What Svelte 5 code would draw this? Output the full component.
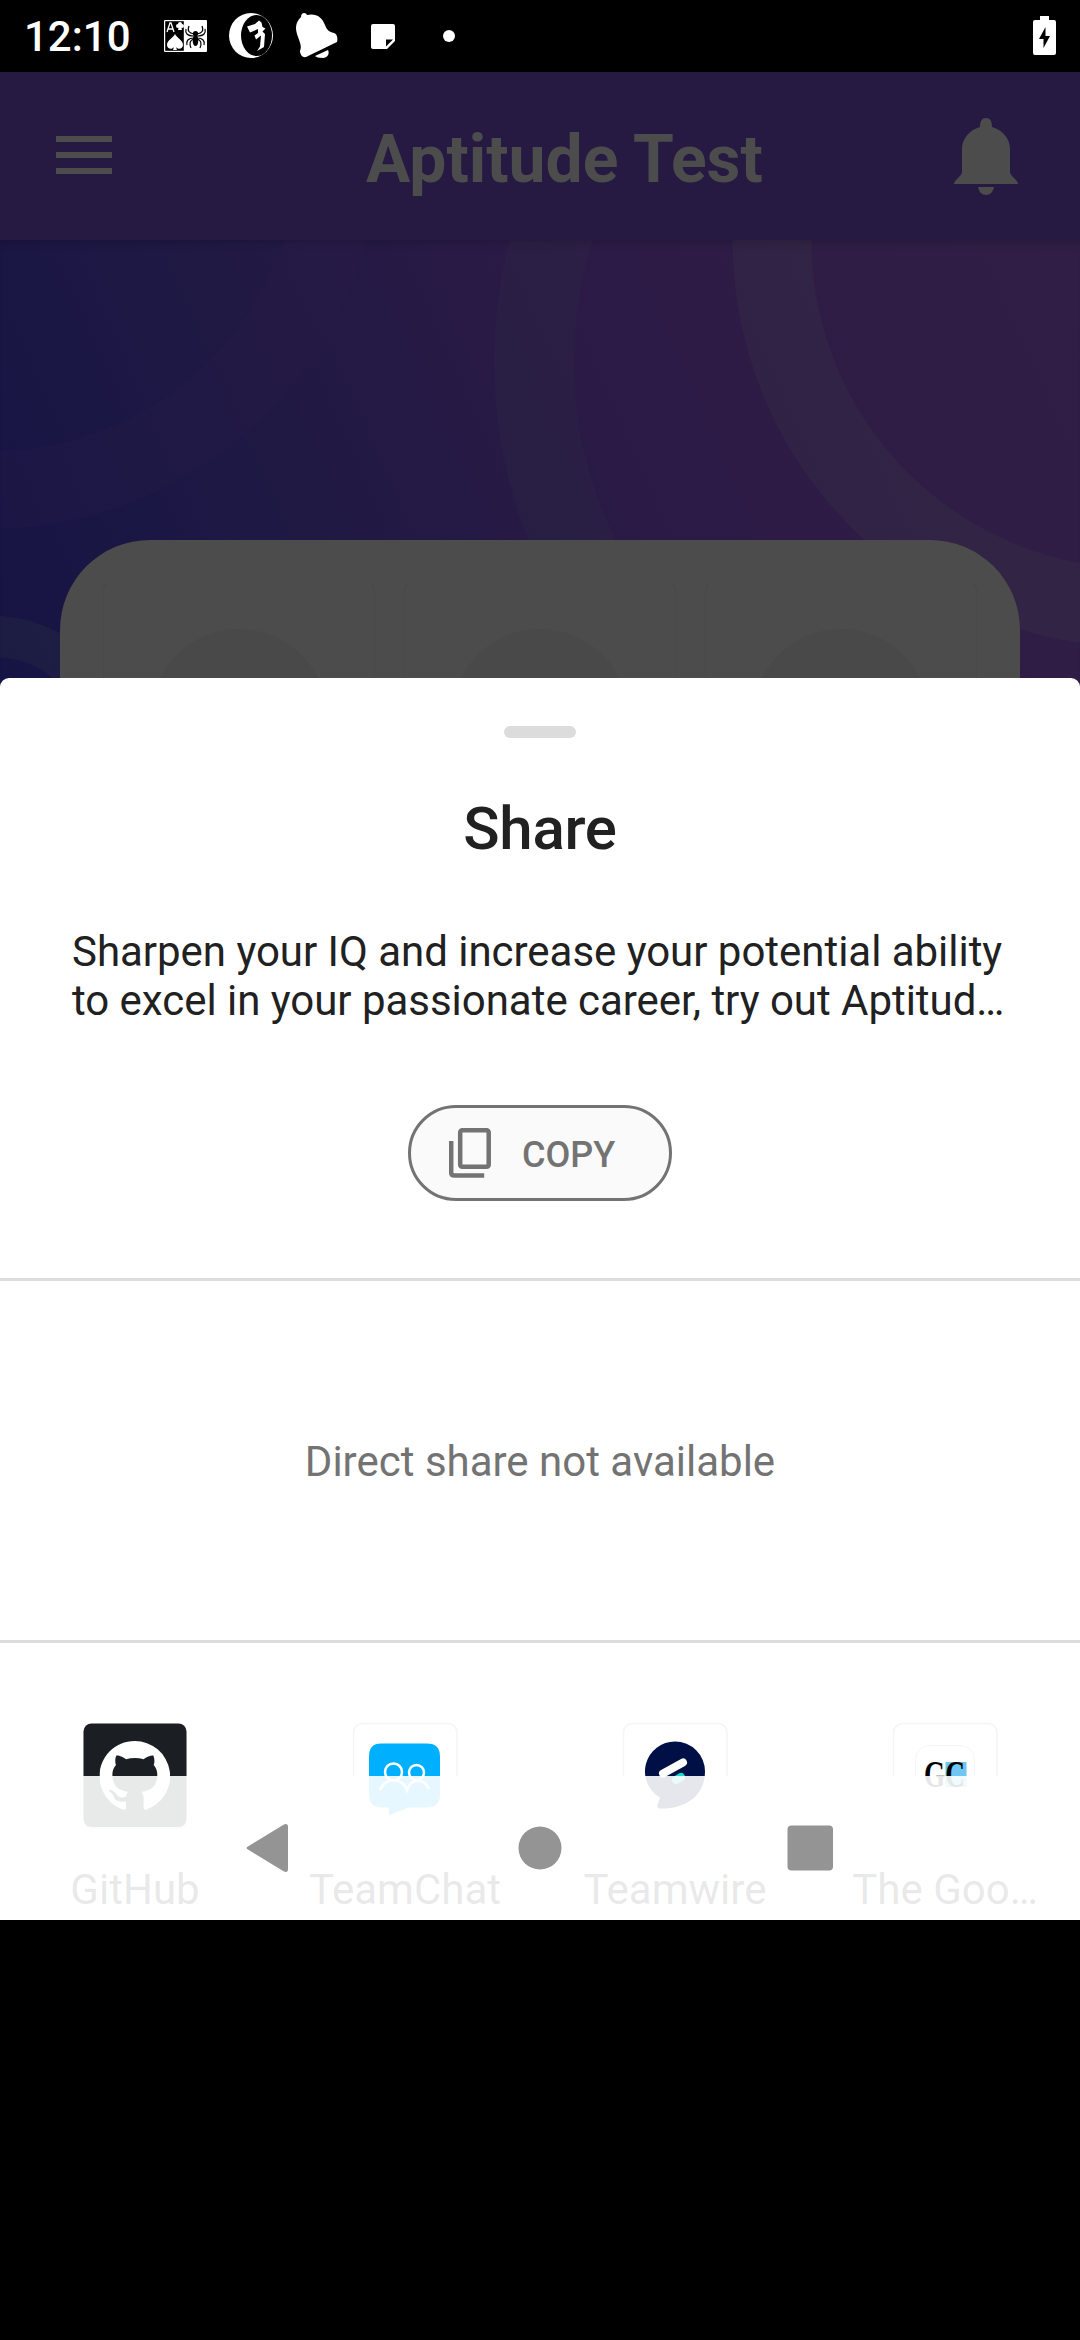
<script>
  const apps = [
    { name: 'GitHub', icon: 'github' },
    { name: 'TeamChat', icon: 'teamchat' },
    { name: 'Teamwire', icon: 'teamwire' },
    { name: 'The Goo…', icon: 'good' },
  ];
</script>

<div class="screen">
  <header class="status">
    <span class="time">12:10</span>
    <svg class="notifs" width="300" height="72" viewBox="155 0 300 72">
      <rect x="164" y="20" width="43" height="32" rx="1" fill="#fff" />
      <rect x="165.200" y="21.200" width="18.600" height="29.600" fill="#000" />
      <path d="M167 32l3-9h1l3 9M168 29h5" fill="none" stroke="#fff" stroke-width="1.300" />
      <circle cx="178" cy="26" r="2" fill="#fff" /><circle cx="182" cy="26" r="2" fill="#fff" /><circle cx="180" cy="24" r="2" fill="#fff" /><path d="M179 26h2l1 4h-4z" fill="#fff" />
      <path d="M175 34C173 38 167 40 167 45c0 4 5 5 7 2l-1 3h4l-1-3c2 3 7 2 7-2 0-5-6-7-8-11z" fill="#fff" />
      <g fill="none" stroke="#000" stroke-width="1.200">
        <path d="M194 33c-5-1-7-3-5-8M194 35c-7 0-9-3-8-7M194 37c-6 0-8 3-7 7M194 38c-4 1-5 4-3 9M197 33c5-1 7-3 5-8M197 35c7 0 9-3 8-7M197 37c6 0 8 3 7 7M197 38c4 1 5 4 3 9" transform="translate(0 1)" />
      </g>
      <ellipse cx="195.500" cy="40.500" rx="2.800" ry="5.500" fill="#000" /><circle cx="195.500" cy="33.500" r="2.600" fill="#000" />
      <ellipse cx="251" cy="35.500" rx="22" ry="22.500" fill="#fff" />
      <ellipse cx="256.500" cy="35.500" rx="15.500" ry="20.500" fill="#000" />
      <path d="M247 26.500l8-2.500 4-3.500 2.500 2 1 4.500 3 1.500-3 3 2.500 2.500-1 13-7 4 3-4.500 1-11-5 4-1.500-4 3.500-2.500v-4l-8 3.500z" fill="#fff" />
      <path d="M301 17c0-5 5-5 6-2 9-2 15 2 18 10 2 5 4 7 9 8 3 1 4 5 3 9L306 57c-4 1-6-3-6-6 2-5 0-8-2-14-3-8-3-14 3-20z" fill="#fff" />
      <path d="M315 56l13-6c2 4-1 8-5 8-4 0-7-1-8-2z" fill="#fff" />
      <path d="M373 24h20q2 0 2 2v15l-8 8h-14q-2 0-2-2V26q0-2 2-2z" fill="#fff" />
      <path d="M386 46.500v-7h7z" fill="#000" />
      <circle cx="449" cy="36" r="6" fill="#fff" />
    </svg>
    <svg class="battery" width="24" height="40" viewBox="0 0 24 40">
      <path d="M7 0h9v4h5q2 0 2 2v31q0 2-2 2H2q-2 0-2-2V6q0-2 2-2h5z" fill="#fff" />
      <path d="M12.500 11L6 23h4.500v9L17 20h-4.500z" fill="#000" />
    </svg>
  </header>

  <section class="app">
    <div class="bar">
      <svg class="menu" width="56" height="38" viewBox="0 0 56 38"><path d="M0 3h56M0 19h56M0 35h56" stroke="#4c4c4c" stroke-width="6" /></svg>
      <h1>Aptitude Test</h1>
      <svg class="bell" width="66" height="80" viewBox="0 0 66 80" fill="#4c4c4c">
        <path d="M33 1c4 0 6 3 6 9 11 3 18 12 18 22v23c0 4 8 8 8 12H1c0-4 8-8 8-12V32c0-10 7-19 18-22 0-6 2-9 6-9z" />
        <path d="M25 70h16c-1 5-4 8-8 8s-7-3-8-8z" />
      </svg>
    </div>
    <div class="hero">
      <svg class="rings" width="1080" height="448" viewBox="0 240 1080 448" fill="none">
        <circle cx="-10" cy="140" r="350" stroke="#3c2450" stroke-opacity=".12" stroke-width="78" />
        <circle cx="974" cy="362" r="440" stroke="#3d4941" stroke-opacity=".1" stroke-width="80" />
        <circle cx="1140" cy="240" r="368" stroke="#3d4941" stroke-opacity=".17" stroke-width="79" />
        <circle cx="-5" cy="746" r="109.500" stroke="#3d4941" stroke-opacity=".16" stroke-width="41" />
      </svg>
      <div class="card">
        {#each [0, 1, 2] as n (n)}
          <div class="tile"><span class="disc"></span></div>
        {/each}
      </div>
    </div>
  </section>

  <main class="sheet">
    <span class="handle"></span>
    <h2>Share</h2>
    <p class="preview">Sharpen your IQ and increase your potential ability<br />to excel in your passionate career, try out Aptitud…</p>
    <button class="copy">
      <svg width="42" height="50" viewBox="0 0 42 50" fill="none" stroke="#737373" stroke-width="4.500">
        <rect x="11.200" y="2.200" width="28.500" height="36.500" rx="2" />
        <path d="M2.200 13v31.500q0 3 3 3h30" />
      </svg>
      <span>COPY</span>
    </button>
    <div class="direct">Direct share not available</div>
    <div class="apps">
      {#each apps as app (app.name)}
        <div class="item">
          <svg width="108" height="112" viewBox="0 0 108 112">
            {#if app.icon === 'github'}
              <rect x="2.500" y="4" width="103" height="104" rx="8" fill="#000" opacity=".12" />
              <rect x="2.500" y="2.500" width="103" height="103.500" rx="8" fill="#1b1f24" />
              <svg x="18.500" y="20" width="70.500" height="70.500" viewBox="0 0 16 16"><path fill="#fff" d="M8 0C3.580 0 0 3.580 0 8c0 3.540 2.290 6.530 5.470 7.590.4.070.55-.17.55-.38 0-.19-.01-.82-.01-1.490-2.010.37-2.530-.49-2.690-.94-.09-.23-.48-.94-.82-1.130-.28-.15-.68-.52-.01-.53.63-.01 1.080.58 1.230.82.72 1.210 1.870.87 2.330.66.07-.52.28-.87.51-1.070-1.780-.2-3.640-.89-3.640-3.950 0-.87.31-1.590.82-2.150-.08-.2-.36-1.020.08-2.120 0 0 .67-.21 2.200.82.64-.18 1.320-.27 2-.27s1.360.09 2 .27c1.530-1.040 2.200-.82 2.200-.82.44 1.100.16 1.920.08 2.120.51.56.82 1.270.82 2.150 0 3.070-1.870 3.750-3.650 3.950.29.25.54.73.54 1.480 0 1.070-.01 1.930-.01 2.200 0 .21.15.46.55.38A8 8 0 0 0 8 0z" /></svg>
            {:else}
              <rect x="2.500" y="2.500" width="103.500" height="106" rx="9" fill="#fff" stroke="#f5f5f5" stroke-width="1.500" />
            {/if}
            {#if app.icon === 'teamchat'}
              <path d="M30 22.500h46q13 0 13 13v38q0 13-13 13H57L38 94.500v-8H31q-13 0-13-13v-38q0-13 12-13z" fill="#00b0ff" />
              <g fill="none" stroke="#fff" stroke-width="2.500"><circle cx="42.500" cy="51" r="8.500" /><circle cx="65.500" cy="51.500" r="7.500" /><path d="M29 69c5-13 22-13 27 0c4-12 17-12 22-1" /></g>
            {:else if app.icon === 'teamwire'}
              <path d="M54 20.500a30 30 0 0 1 30 30c0 24-19 38-46 37q-3-2-1-5l2-6A30 30 0 0 1 54 20.500z" fill="#001047" />
              <path d="M42 52.500l20-11" stroke="#fff" stroke-width="8" stroke-linecap="round" />
              <path d="M55 59l5-3" stroke="#15dcc8" stroke-width="8" stroke-linecap="round" />
            {:else if app.icon === 'good'}
              <rect x="24.500" y="24.500" width="59" height="59" rx="14" fill="#fff" stroke="#f6f6f6" />
              <rect x="54.500" y="41" width="21" height="25" fill="#6ec6f2" />
              <text class="gc" x="33" y="65.500" textLength="41" lengthAdjust="spacingAndGlyphs">GC</text>
            {/if}
          </svg>
          <span>{app.name}</span>
        </div>
      {/each}
    </div>
  </main>

  <nav>
    <svg width="1080" height="144" viewBox="0 1776 1080 144" fill="#949494">
      <path d="M248 1846.500L284 1824.500Q288 1823 288 1827V1869Q288 1873 284 1871.500L248 1849.500Q245 1848 248 1846.500z" />
      <circle cx="540" cy="1848" r="21.500" />
      <rect x="787.500" y="1825.500" width="45.500" height="45" rx="4" />
    </svg>
  </nav>
</div>

<style>
  :global(body) { margin: 0; background: #000; }
  .screen { position: relative; width: 1080px; height: 2340px; background: #000; overflow: hidden; font-family: Roboto, sans-serif; display: flex; flex-direction: column; }
  .status { height: 72px; display: flex; align-items: center; padding: 0 23px 0 24px; box-sizing: border-box; color: #fff; flex: none; }
  .time { font-size: 42px; font-weight: 500; line-height: 72px; width: 131px; padding-top: 2px; }
  .battery { margin-left: auto; }
  .app { flex: none; height: 616px; }
  .bar { height: 168px; background: #261a43; display: flex; align-items: center; padding: 0 61px 0 56px; box-sizing: border-box; }
  .menu { margin-bottom: 2px; }
  .bell { margin: 0 0 -2px auto; }
  h1 { margin: 7px 0 0 254px; font-size: 66px; line-height: 80px; font-weight: 700; color: #4c4c4c; white-space: nowrap; }
  .hero { height: 448px; position: relative; background: linear-gradient(66deg, #161444 0%, #1b1744 18%, #201944 32%, #281a45 50%, #2d1b46 66%, #2f1d46 82%, #301e46 100%); padding: 300px 60px 0; box-sizing: border-box; overflow: hidden; box-shadow: inset 0 8px 8px -6px rgba(0, 0, 0, 0.2); }
  .rings { position: absolute; left: 0; top: 0; }
  .card { position: relative; height: 300px; border-radius: 90px; background: #4c4c4c; padding: 40px 43px 0; box-sizing: border-box; display: grid; grid-template-columns: repeat(3, 272px); justify-content: space-between; }
  .tile { border: 1px solid #494949; border-top-color: transparent; border-radius: 12px; display: flex; justify-content: center; padding-top: 48px; }
  .disc { width: 176px; height: 176px; border-radius: 50%; background: #494949; flex: none; }
  .sheet { position: relative; flex: none; height: 1242px; background: #fff; border-radius: 9px 9px 0 0; display: flex; flex-direction: column; align-items: center; margin-top: -10px; color: #212121; }
  .handle { width: 72px; height: 12px; border-radius: 6px; background: #dcdcdc; margin-top: 48px; flex: none; }
  h2 { margin: 55px 0 0; font-size: 60px; line-height: 72px; font-weight: 500; letter-spacing: -0.3px; }
  .preview { margin: 62px 72px 0; width: 936px; font-size: 42px; line-height: 49px; white-space: nowrap; letter-spacing: -0.03px; }
  .copy { margin-top: 80px; width: 264px; height: 96px; box-sizing: border-box; border: 3px solid #737373; border-radius: 48px; background: #fafafa; color: #737373; display: flex; align-items: center; padding: 0 0 0 38px; gap: 31px; font: 500 36px/48px Roboto, sans-serif; flex: none; }
  .copy span { padding-top: 3px; }
  .direct { width: 100%; margin-top: 77px; height: 365px; box-sizing: border-box; border-top: 3px solid #dcdcdc; border-bottom: 3px solid #dcdcdc; padding-top: 2px; display: flex; align-items: center; justify-content: center; font-size: 42px; color: #737373; }
  .apps { width: 100%; display: grid; grid-template-columns: repeat(4, 270px); padding-top: 78px; }
  .item { display: flex; flex-direction: column; align-items: center; gap: 31px; font-size: 42px; line-height: 52px; }
  .gc { font: 700 37px "Liberation Serif", serif; }
  nav { position: absolute; left: 0; top: 1776px; width: 1080px; height: 144px; background: rgba(255, 255, 255, 0.9); }
</style>
